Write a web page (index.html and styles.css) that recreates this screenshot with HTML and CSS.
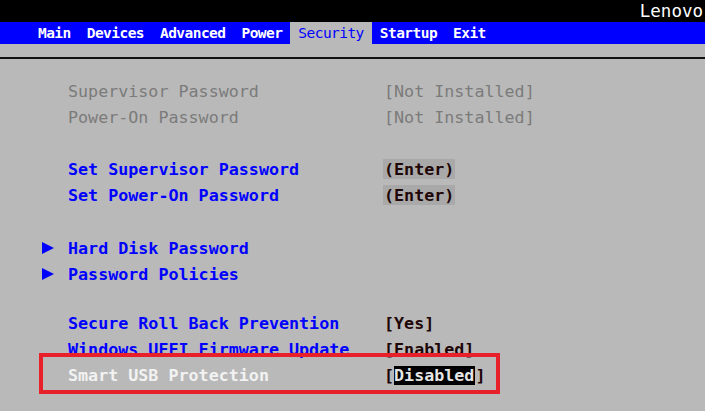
FILE: index.html
```html
<!DOCTYPE html>
<html>
<head>
<meta charset="utf-8">
<link rel="stylesheet" href="styles.css">
</head>
<body>
<div class="screen">
  <header class="topbar"><span class="brand">Lenovo</span></header>
  <nav class="menu">
    <span class="tab">Main</span>
    <span class="tab">Devices</span>
    <span class="tab">Advanced</span>
    <span class="tab">Power</span>
    <span class="tab active">Security</span>
    <span class="tab">Startup</span>
    <span class="tab">Exit</span>
  </nav>
  <div class="strip"></div>
  <main class="content">
    <section class="group g1">
      <div class="row dim"><span class="mark"></span><span class="label">Supervisor Password</span><span class="value">[Not Installed]</span></div>
      <div class="row dim"><span class="mark"></span><span class="label">Power-On Password</span><span class="value">[Not Installed]</span></div>
    </section>
    <section class="group g2">
      <div class="row"><span class="mark"></span><span class="label">Set Supervisor Password</span><span class="value"><span class="btn">(Enter)</span></span></div>
      <div class="row"><span class="mark"></span><span class="label">Set Power-On Password</span><span class="value"><span class="btn">(Enter)</span></span></div>
    </section>
    <section class="group g3">
      <div class="row"><span class="mark"><svg width="12" height="12" viewBox="0 0 12 12"><polygon points="0,0 12,6 0,12" fill="#0000ff"/></svg></span><span class="label">Hard Disk Password</span><span class="value"></span></div>
      <div class="row"><span class="mark"><svg width="12" height="12" viewBox="0 0 12 12"><polygon points="0,0 12,6 0,12" fill="#0000ff"/></svg></span><span class="label">Password Policies</span><span class="value"></span></div>
    </section>
    <section class="group g4">
      <div class="row"><span class="mark"></span><span class="label">Secure Roll Back Prevention</span><span class="value">[Yes]</span></div>
      <div class="row"><span class="mark"></span><span class="label">Windows UEFI Firmware Update</span><span class="value">[Enabled]</span></div>
      <div class="row selected"><span class="mark"></span><span class="label">Smart USB Protection</span><span class="value">[<span class="hl">Disabled</span>]</span><span class="redbox"></span></div>
    </section>
  </main>
</div>
</body>
</html>
```
FILE: styles.css
```css
* { box-sizing: border-box; }
html, body { margin: 0; padding: 0; }
body {
  width: 705px;
  height: 411px;
  overflow: hidden;
  background: #b9b9b9;
  font-family: "DejaVu Sans Mono", "Liberation Mono", monospace;
}
.screen { width: 705px; height: 411px; background: #b9b9b9; }

.topbar {
  height: 22px;
  background: #000;
  display: flex;
  justify-content: flex-end;
  align-items: center;
  padding-right: 2px;
}
.brand {
  color: #fff;
  font-family: "DejaVu Sans Mono", monospace;
  font-size: 17.5px;
  line-height: 22px;
}

.menu {
  height: 22px;
  background: #0000ff;
  display: flex;
  padding-left: 30px;
}
.tab {
  padding: 0 8px;
  color: #fff;
  font-weight: bold;
  font-size: 14.5px;
  letter-spacing: -0.55px;
  line-height: 22px;
}
.tab.active { background: #b9b9b9; color: #0000ff; font-weight: normal; }

.strip {
  height: 15px;
  border-bottom: 2px solid #111;
}

.content { padding-top: 19px; }
.group + .group { margin-top: 26px; }
.g3 { margin-top: 27px !important; }
.g4 { margin-top: 23px !important; }

.row {
  position: relative;
  display: grid;
  grid-template-columns: 68px 316px 1fr;
  height: 26px;
  align-items: center;
  font-size: 16.7px;
  font-weight: bold;
  line-height: 26px;
  color: #0000ff;
  white-space: pre;
}
.mark { display: flex; align-items: center; padding-left: 42px; height: 26px; }
.mark svg { display: block; }
.value { color: #1e0606; }
.row.dim .label, .row.dim .value { color: #7b7b7b; font-weight: normal; }
.row.selected .label { color: #f2f2f2; }

.btn {
  display: inline-block;
  background: #a9a9a9;
  line-height: 20px;
  margin-left: -1px;
  padding: 0 1px;
}
.hl {
  display: inline-block;
  background: #000;
  color: #e6e6e6;
  line-height: 19px;
  padding: 0 1px 0 0;
}
.redbox {
  position: absolute;
  left: 39px;
  top: -9px;
  width: 461px;
  height: 41px;
  border: 4px solid #e8202a;
}
```
